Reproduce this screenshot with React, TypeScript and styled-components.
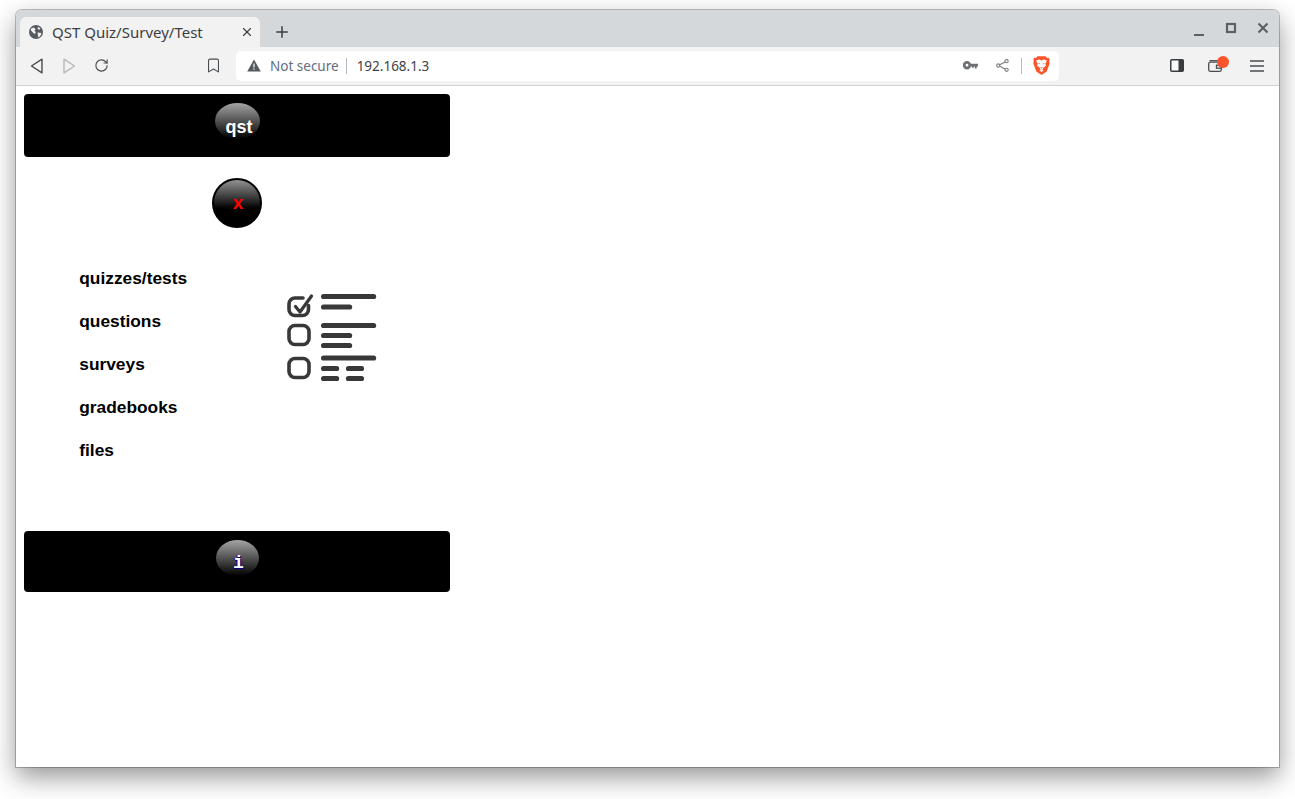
import React from 'react';
import styled, { createGlobalStyle } from 'styled-components';
import { Bookmark, RotateCw, Plus, X } from 'lucide-react';

const Global = createGlobalStyle`
  html, body { margin: 0; padding: 0; background: #fff; }
  body { font-family: "Liberation Sans", Arial, sans-serif; }
`;

const Desktop = styled.div`
  width: 1295px;
  height: 799px;
  padding: 10px 16px 0;
  box-sizing: border-box;
  overflow: hidden;
`;

const Window = styled.div`
  width: 1263px;
  height: 757px;
  display: flex;
  flex-direction: column;
  background: #fff;
  border-radius: 6px 6px 0 0;
  box-shadow: 0 0 0 1px rgba(0, 0, 0, 0.24), 0 10px 26px rgba(0, 0, 0, 0.42);
`;

const TabStrip = styled.div`
  height: 37px;
  flex: none;
  display: flex;
  align-items: flex-end;
  padding-left: 4px;
  background: #d5d8db;
  border-radius: 6px 6px 0 0;
`;

const Tab = styled.div`
  width: 240px;
  height: 30px;
  box-sizing: border-box;
  display: flex;
  align-items: center;
  padding: 0 6px 0 9px;
  background: #f2f2f2;
  border-radius: 6px 6px 0 0;
  color: #3c4043;
`;

const TabTitle = styled.span`
  flex: 1;
  margin: 0 0 1px 9px;
  font: 15px "Noto Sans", sans-serif;
  white-space: nowrap;
`;

const NewTab = styled.div`
  width: 24px;
  height: 30px;
  margin-left: 10px;
  display: flex;
  align-items: center;
  justify-content: center;
  color: #3c4043;
`;

const WindowControls = styled.div`
  margin-left: auto;
  height: 100%;
  display: flex;
  align-items: center;
  gap: 12px;
  padding-right: 6px;
`;

const ControlButton = styled.div`
  width: 20px;
  height: 20px;
  display: flex;
  align-items: center;
  justify-content: center;
`;

const Toolbar = styled.div`
  height: 39px;
  flex: none;
  box-sizing: border-box;
  display: flex;
  align-items: center;
  padding: 0 5px 1px 5px;
  background: #f2f2f2;
  border-bottom: 1px solid #d2d2d2;
`;

const ToolButton = styled.div<{ $w?: number; $ml?: number; $dim?: boolean }>`
  width: ${(p) => p.$w ?? 32}px;
  height: 32px;
  flex: none;
  margin-left: ${(p) => p.$ml ?? 0}px;
  display: flex;
  align-items: center;
  justify-content: center;
  color: ${(p) => (p.$dim ? '#b5b8bb' : '#4a4d50')};
`;

const Omnibox = styled.div`
  width: 823px;
  height: 30px;
  flex: none;
  margin-left: 7px;
  box-sizing: border-box;
  display: flex;
  align-items: center;
  padding: 0 9px 0 11px;
  background: #fff;
  border-radius: 5px;
  font: 13.5px "Noto Sans", sans-serif;
`;

const NotSecure = styled.span`
  margin-left: 9px;
  color: #5f6f82;
`;

const UrlDivider = styled.span<{ $ml?: number; $mr?: number }>`
  width: 1px;
  height: 16px;
  background: #b9bcbf;
  margin: 0 ${(p) => p.$mr ?? 10}px 0 ${(p) => p.$ml ?? 7}px;
`;

const Url = styled.span`
  flex: 1;
  color: #3f4347;
`;

const OmniIcon = styled.div<{ $w: number }>`
  width: ${(p) => p.$w}px;
  display: flex;
  align-items: center;
  justify-content: center;
  color: #6d7074;
`;

const WalletWrap = styled.div`
  position: relative;
  display: flex;
`;

const WalletDot = styled.span`
  position: absolute;
  top: -4px;
  right: -7px;
  width: 12px;
  height: 12px;
  border-radius: 50%;
  background: #fb542b;
`;

const Page = styled.main`
  flex: 1;
  padding: 8px 0 0 8px;
  background: #fff;
`;

const Panel = styled.div`
  width: 426px;
  display: flex;
  flex-direction: column;
`;

const Banner = styled.div<{ $h: number; $pt: number }>`
  height: ${(p) => p.$h}px;
  box-sizing: border-box;
  padding-top: ${(p) => p.$pt}px;
  display: flex;
  justify-content: center;
  align-items: flex-start;
  background: #000;
  border-radius: 4px;
`;

const Orb = styled.div<{ $w: number; $h: number }>`
  width: ${(p) => p.$w}px;
  height: ${(p) => p.$h}px;
  display: flex;
  align-items: center;
  justify-content: center;
  border-radius: 50%;
  background: linear-gradient(to bottom, #a4a4a4 0%, #000 100%);
`;

const OrbLabel = styled.span`
  margin: 13px 0 0 4px;
  color: #fff;
  font-size: 18px;
  font-weight: 700;
`;

const InfoLabel = styled.span`
  margin: 10px 0 0 3px;
  color: #fff;
  font: 700 18px/16px "Liberation Mono", monospace;
  text-shadow: 1px 1px 0 #000080, 0 1px 0 #000080, -1px 0 0 #000080;
`;

const CloseOrb = styled.div`
  width: 50px;
  height: 50px;
  margin: 21px auto 0;
  box-sizing: border-box;
  display: flex;
  align-items: center;
  justify-content: center;
  border: 2px solid #000;
  border-radius: 50%;
  background: linear-gradient(to bottom, #929292 0%, #000 62%);
  color: #f00;
  font-size: 19px;
  font-weight: 700;
  padding: 0 0 0 2px;
`;

const MenuRow = styled.div`
  display: flex;
  margin-top: 40px;
`;

const Menu = styled.nav`
  width: 263px;
  flex: none;
  box-sizing: border-box;
  padding-left: 55.25px;
  display: flex;
  flex-direction: column;
  gap: 23px;
`;

const MenuItem = styled.a`
  color: #000;
  font-size: 17.33px;
  font-weight: 700;
  line-height: 20px;
`;

const Checklist = styled.svg`
  margin-top: 25px;
  flex: none;
  filter: blur(0.4px);
`;

const Footer = styled(Banner)`
  margin-top: 71px;
`;

const Back = ({ dim }: { dim?: boolean }) => (
  <svg width="16" height="16" viewBox="0 0 16 16" fill="none" stroke="currentColor" strokeWidth="1.4" strokeLinejoin="round">
    {dim ? <path d="M3 1.2 13.5 8 3 14.8z" /> : <path d="M13 1.2 2.5 8 13 14.8z" />}
  </svg>
);

const Globe = () => (
  <svg width="14" height="14" viewBox="0 0 14 14">
    <circle cx="7" cy="7" r="7" fill="#555a60" />
    <path d="M2 3.5 5 2.6l1.5 1.6-1 1.5L6.8 7 6 9 4.3 8 2 5.6zM9 1.8l2.6 1.8-1.3 1.2-1.6-.8zM8.6 7.4l3.9.6-1.2 3-2 1.4-.4-2.4z" fill="#f2f2f2" />
  </svg>
);

const Warning = () => (
  <svg width="14" height="13" viewBox="0 0 14 13">
    <path d="M7 .5 13.8 12.5H.2z" fill="#55595d" />
    <path d="M6.4 4.6h1.2v4H6.4zM6.4 9.6h1.2v1.2H6.4z" fill="#fff" />
  </svg>
);

const Key = () => (
  <svg width="15" height="9" viewBox="0 0 15 9" fill="currentColor">
    <path d="M4 0a4.2 4.2 0 1 1-.01 8.4A4.2 4.2 0 0 1 4 0zm0 2.8a1.4 1.4 0 1 0 0 2.8 1.4 1.4 0 0 0 0-2.8z" />
    <path d="M7.5 2.8H15v2.6h-1.3V7.4h-1.9V5.4h-1V6.8H9V5.4H7.5z" />
  </svg>
);

const ShareNodes = () => (
  <svg width="13" height="13" viewBox="0 0 13 13" fill="none" stroke="#7a7d80" strokeWidth="1.1">
    <circle cx="2.2" cy="6.5" r="1.6" />
    <circle cx="10.6" cy="2.2" r="1.6" />
    <circle cx="10.6" cy="10.8" r="1.6" />
    <path d="M3.7 5.7 9.1 3M3.7 7.3 9.1 10" />
  </svg>
);

const BraveLogo = () => (
  <svg width="17" height="19" viewBox="0 0 17 19">
    <path d="M4.4.3h8.2l1.4 1.6 1.7-.2 1 1.7-.5 2 .6 1.5-3.1 8.6L8.5 19l-5.2-3.5L.2 6.9l.6-1.5-.5-2 1-1.7L3 1.9z" fill="#fb542b" />
    <path d="M8.5 4.4 6 3.5 3 4.6l1.7 3.2-.7 2 2.6 1.8.6 1.3h2.6l.6-1.3 2.6-1.8-.7-2L14 4.6l-3-1.1z" fill="#fff" />
    <path d="M6.4 14 8.5 12.9 10.6 14 8.5 16.2z" fill="#fff" />
    <path d="M7 11.2h3L8.5 12.6zM5 6.8l2 .7-.3 1zM12 6.8l-2 .7.3 1z" fill="#fb542b" />
  </svg>
);

const SidePanel = () => (
  <svg width="14" height="13" viewBox="0 0 14 13">
    <rect x=".75" y=".75" width="12.5" height="11.5" rx="1" fill="#fafafa" stroke="#3a3d40" strokeWidth="1.5" />
    <rect x="8.5" y="1" width="5" height="11" fill="#3a3d40" />
  </svg>
);

const Wallet = () => (
  <svg width="14" height="12" viewBox="0 0 14 12" fill="none" stroke="#4a4d50" strokeWidth="1.3">
    <rect x=".7" y="2.2" width="12.6" height="9.1" rx="1.5" />
    <path d="M1.5 .7h10" />
    <rect x="8.5" y="5.2" width="4.8" height="3" />
  </svg>
);

const Hamburger = () => (
  <svg width="14" height="12" viewBox="0 0 14 12" stroke="#4a4d50" strokeWidth="1.4">
    <path d="M0 1h14M0 6h14M0 11h14" />
  </svg>
);

const MinimizeGlyph = () => (
  <svg width="20" height="20" viewBox="0 0 20 20" stroke="#5c6166" strokeWidth="2">
    <path d="M5 16h10" />
  </svg>
);

const MaximizeGlyph = () => (
  <svg width="20" height="20" viewBox="0 0 20 20" fill="none" stroke="#5c6166" strokeWidth="2.2">
    <rect x="6" y="5" width="8" height="8" />
  </svg>
);

const CloseGlyph = () => (
  <svg width="20" height="20" viewBox="0 0 20 20" stroke="#5c6166" strokeWidth="2.2">
    <path d="M5.5 4.5l9 9M14.5 4.5l-9 9" />
  </svg>
);

const ChecklistIcon = () => (
  <Checklist width="90" height="90" viewBox="0 0 90 90" fill="none" stroke="#383838" strokeLinecap="round" strokeLinejoin="round">
    <g strokeWidth="3.6">
      <path d="M16 5H8a6 6 0 0 0-6 6v5.5a6 6 0 0 0 6 6h7.5a6 6 0 0 0 6-6v-4" />
      <path d="M8.5 13.5l4.5 5.5L24.5 3" strokeWidth="3.2" />
      <rect x="2" y="32.5" width="20" height="19" rx="6" />
      <rect x="2" y="65.5" width="20" height="19" rx="6" />
    </g>
    <g strokeWidth="5.2">
      <path d="M36.6 3.5h50M36.6 14h26M36.6 32.5h50M36.6 42.5h26M36.6 52.5h26M36.6 65h50" />
      <path d="M36.6 75.5h13M61.5 75.5h13M36.6 85.5h13M61.5 85.5h13" />
    </g>
  </Checklist>
);

const items = ['quizzes/tests', 'questions', 'surveys', 'gradebooks', 'files'];

export default function App() {
  return (
    <Desktop>
      <Global />
      <Window>
        <TabStrip>
          <Tab>
            <Globe />
            <TabTitle>QST Quiz/Survey/Test</TabTitle>
            <X size={14} strokeWidth={2} />
          </Tab>
          <NewTab>
            <Plus size={18} strokeWidth={2} />
          </NewTab>
          <WindowControls>
            <ControlButton><MinimizeGlyph /></ControlButton>
            <ControlButton><MaximizeGlyph /></ControlButton>
            <ControlButton><CloseGlyph /></ControlButton>
          </WindowControls>
        </TabStrip>
        <Toolbar>
          <ToolButton><Back /></ToolButton>
          <ToolButton $dim><Back dim /></ToolButton>
          <ToolButton><RotateCw size={15} strokeWidth={1.8} /></ToolButton>
          <ToolButton $ml={80}><Bookmark size={17} strokeWidth={1.5} /></ToolButton>
          <Omnibox>
            <Warning />
            <NotSecure>Not secure</NotSecure>
            <UrlDivider $mr={10} />
            <Url>192.168.1.3</Url>
            <OmniIcon $w={32}><Key /></OmniIcon>
            <OmniIcon $w={32}><ShareNodes /></OmniIcon>
            <UrlDivider $ml={3} $mr={11} />
            <BraveLogo />
          </Omnibox>
          <ToolButton $ml={102}><SidePanel /></ToolButton>
          <ToolButton $ml={6}><WalletWrap><Wallet /><WalletDot /></WalletWrap></ToolButton>
          <ToolButton $ml={10}><Hamburger /></ToolButton>
        </Toolbar>
        <Page>
          <Panel>
            <Banner $h={63} $pt={9}>
              <Orb $w={45} $h={36}><OrbLabel>qst</OrbLabel></Orb>
            </Banner>
            <CloseOrb>x</CloseOrb>
            <MenuRow>
              <Menu>
                {items.map((t) => <MenuItem key={t}>{t}</MenuItem>)}
              </Menu>
              <ChecklistIcon />
            </MenuRow>
            <Footer $h={61} $pt={9}>
              <Orb $w={43} $h={36}><InfoLabel>i</InfoLabel></Orb>
            </Footer>
          </Panel>
        </Page>
      </Window>
    </Desktop>
  );
}
